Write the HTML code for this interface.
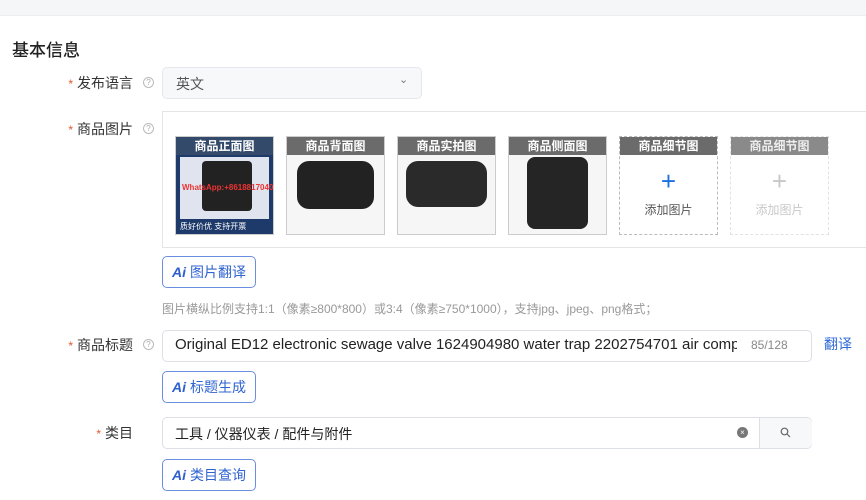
<!DOCTYPE html>
<html><head><meta charset="utf-8"><style>
*{box-sizing:border-box;margin:0;padding:0}
body{width:866px;height:500px;overflow:hidden;background:#fff;font-family:"Liberation Sans","Noto Sans CJK SC",sans-serif;color:#333;position:relative}
.abs{position:absolute}
.top{left:0;top:0;width:866px;height:16px;background:#f5f6f8;border-bottom:1px solid #eceef2}
.h{left:12px;top:36px;font-size:17px;color:#222;font-weight:500}
.lab{font-size:14px;color:#333;text-align:right;width:123px}
.lab b{color:#e4572e;font-weight:normal;margin-right:4px;font-size:12px;vertical-align:middle}
.q{width:11px;height:11px;border:1px solid #bbb;border-radius:50%;font-size:8px;color:#aaa;text-align:center;line-height:9px}
.inp{border:1px solid #dcdfe6;border-radius:5px;background:#fff}
.btn{border:1px solid #6b8fe0;border-radius:5px;color:#3064d0;font-size:14px;width:94px;height:32px;line-height:30px;padding-left:9px;background:#fff}
.btn i{font-style:italic;font-weight:bold;font-size:14px;margin-right:4px;color:#2f5fcf}
.th{width:99px;height:99px;border:1px solid #ccc;background:#eef0f3;overflow:hidden}
.th .hd{height:18px;background:#6b6b6b;color:#fff;font-size:12px;text-align:center;line-height:18px;font-weight:bold}
.dash{border:1px dashed #bbb;background:#fff}
</style></head><body>
<div class="abs top"></div>
<div class="abs h">基本信息</div>

<div class="abs lab" style="left:10px;top:73px"><b>*</b>发布语言</div>
<div class="abs q" style="left:143px;top:77px">?</div>
<div class="abs inp" style="left:162px;top:67px;width:260px;height:32px;background:#f7f8fa;border-color:#e4e7ed"><span class="abs" style="left:13px;top:6px;font-size:14px;color:#555">英文</span><span class="abs" style="left:236px;top:5px;font-size:11px;color:#777">⌄</span></div>

<div class="abs lab" style="left:10px;top:119px"><b>*</b>商品图片</div>
<div class="abs q" style="left:143px;top:123px">?</div>
<div class="abs" style="left:162px;top:111px;width:720px;height:137px;border:1px solid #e5e5e5"></div>

<div class="abs th" style="left:175px;top:136px;background:#1e3a6a"><div class="hd" style="background:#334a6a">商品正面图</div><div style="margin:2px 4px;height:62px;background:#dfe4ee;position:relative"><div class="abs" style="left:22px;top:4px;width:50px;height:50px;background:#222;border-radius:4px"></div><div class="abs" style="left:2px;top:26px;font-size:8px;color:#e33;font-weight:bold">WhatsApp:+8618817040688</div></div><div style="font-size:8px;color:#fff;padding-left:4px">质好价优 支持开票</div></div>
<div class="abs th" style="left:286px;top:136px;background:#f6f6f6"><div class="hd">商品背面图</div><div style="margin:6px 10px;height:48px;background:#222;border-radius:12px"></div></div>
<div class="abs th" style="left:397px;top:136px;background:#f6f6f6"><div class="hd">商品实拍图</div><div style="margin:6px 8px;height:46px;background:#2a2a2a;border-radius:12px"></div></div>
<div class="abs th" style="left:508px;top:136px;background:#f6f6f6"><div class="hd">商品侧面图</div><div style="margin:2px 18px;height:72px;background:#252525;border-radius:8px"></div></div>
<div class="abs th dash" style="left:619px;top:136px"><div class="hd">商品细节图</div><div style="text-align:center;color:#1e6fe0;font-size:26px;line-height:28px;margin-top:12px">+</div><div style="text-align:center;font-size:12px;color:#555;margin-top:6px">添加图片</div></div>
<div class="abs th dash" style="left:730px;top:136px;border-color:#e2e2e2"><div class="hd" style="background:#8a8a8a;color:#eee">商品细节图</div><div style="text-align:center;color:#c8c8c8;font-size:26px;line-height:28px;margin-top:12px">+</div><div style="text-align:center;font-size:12px;color:#c8c8c8;margin-top:6px">添加图片</div></div>

<div class="abs btn" style="left:162px;top:256px"><i>Ai</i>图片翻译</div>
<div class="abs" style="left:162px;top:300px;font-size:12px;color:#999">图片横纵比例支持1:1（像素≥800*800）或3:4（像素≥750*1000），支持jpg、jpeg、png格式；</div>

<div class="abs lab" style="left:10px;top:335px"><b>*</b>商品标题</div>
<div class="abs q" style="left:143px;top:339px">?</div>
<div class="abs inp" style="left:162px;top:330px;width:650px;height:32px;overflow:hidden"><span class="abs" style="left:12px;top:5px;font-size:15px;color:#222;white-space:nowrap;width:562px;overflow:hidden;display:block">Original ED12 electronic sewage valve 1624904980 water trap 2202754701 air compressor</span><span class="abs" style="left:588px;top:7px;font-size:12px;color:#888">85/128</span></div>
<div class="abs" style="left:824px;top:334px;font-size:14px;color:#2f6bd8">翻译</div>

<div class="abs btn" style="left:162px;top:371px"><i>Ai</i>标题生成</div>

<div class="abs lab" style="left:10px;top:423px"><b>*</b>类目</div>
<div class="abs inp" style="left:162px;top:417px;width:650px;height:32px"><span class="abs" style="left:12px;top:6px;font-size:14px;color:#222">工具 / 仪器仪表 / 配件与附件</span><span class="abs" style="left:574px;top:9px;width:11px;height:11px;border-radius:50%;background:#777;color:#fff;font-size:8px;text-align:center;line-height:11px">×</span><div class="abs" style="left:596px;top:0;width:53px;height:30px;border-left:1px solid #dcdfe6;background:#f7f8fa;border-radius:0 5px 5px 0"><svg class="abs" style="left:20px;top:9px" width="11" height="11" viewBox="0 0 11 11"><circle cx="4.5" cy="4.5" r="3.3" fill="none" stroke="#666" stroke-width="1.2"/><path d="M7 7l3 3" stroke="#666" stroke-width="1.2"/></svg></div></div>

<div class="abs btn" style="left:162px;top:459px"><i>Ai</i>类目查询</div>
</body></html>
